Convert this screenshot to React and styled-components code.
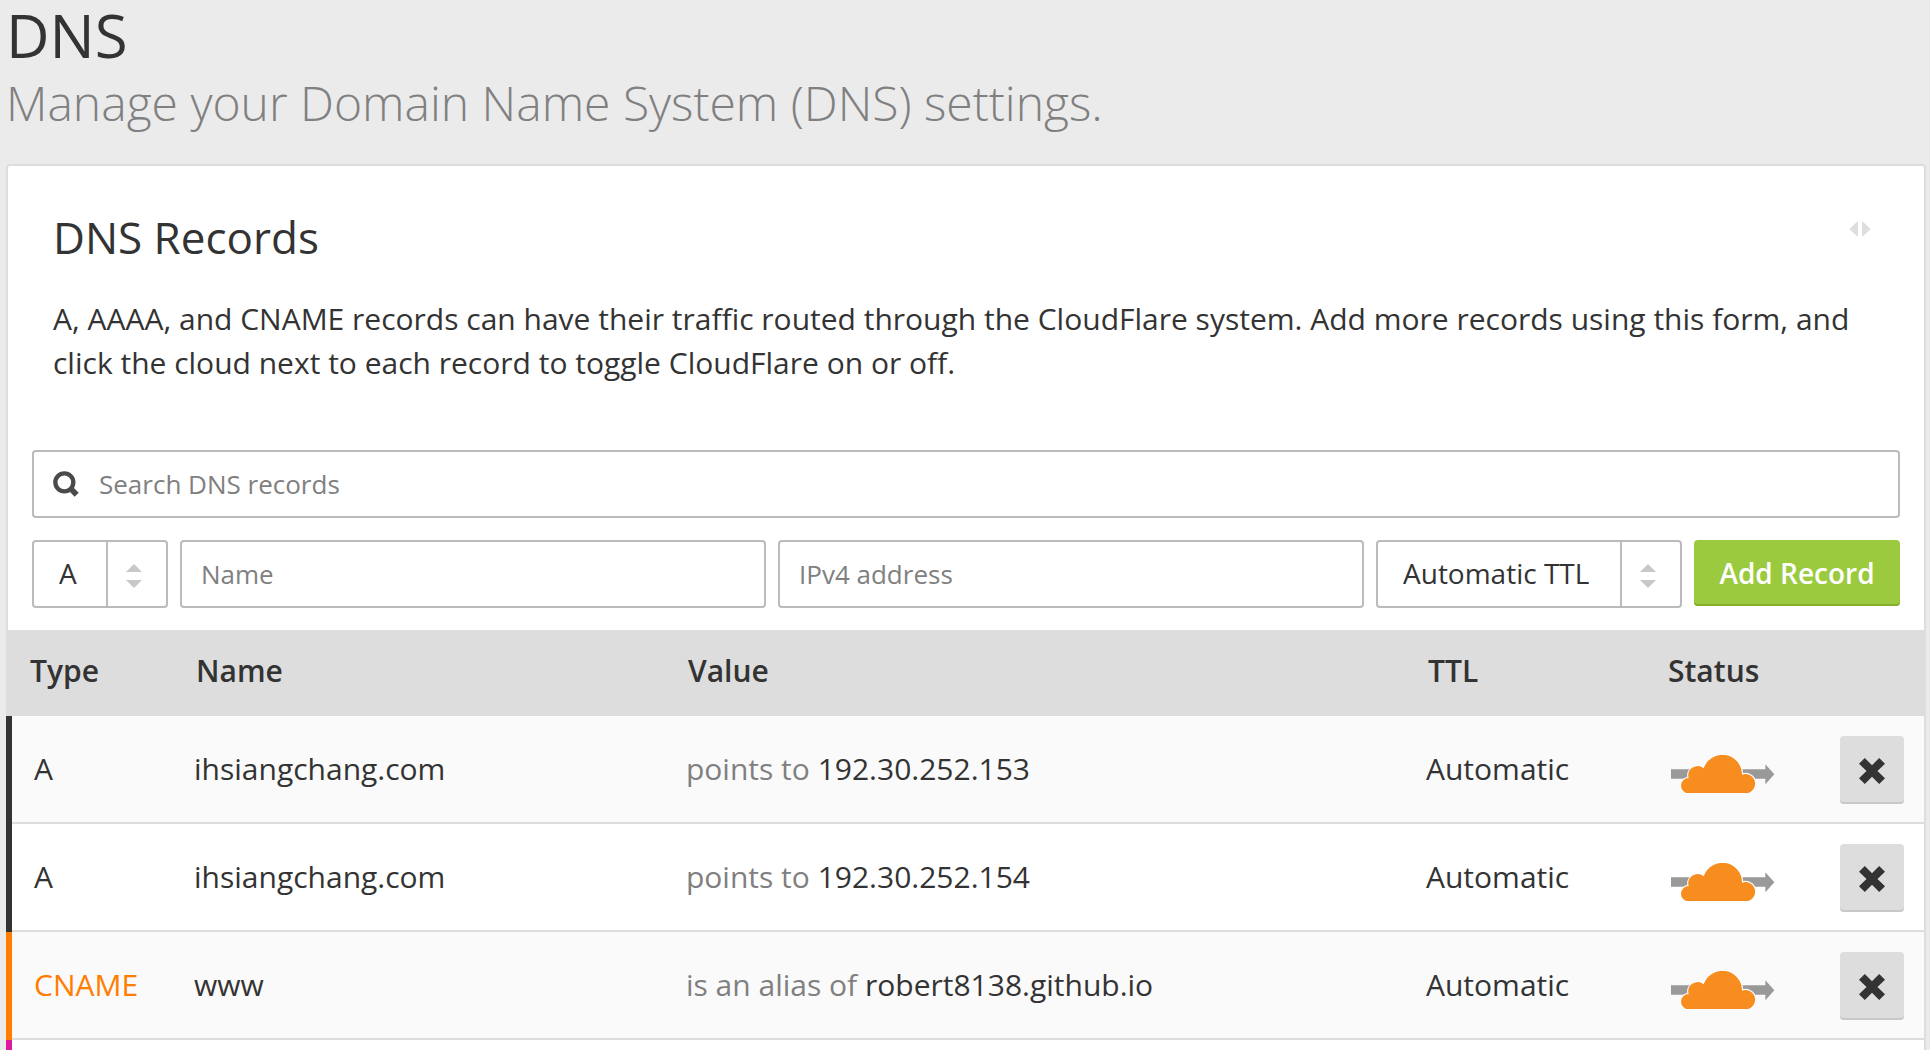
import React from "react";
import styled, { createGlobalStyle } from "styled-components";

const ink = "#333";
const line = "#ddd";
const field = "#bbb";

const GlobalStyle = createGlobalStyle`
  *, *::before, *::after { box-sizing: border-box; }
  body {
    margin: 0;
    background: #ebebeb;
    color: ${ink};
    font-family: "Open Sans", "Noto Sans", sans-serif;
    font-size: 30px;
  }
  button, input, select { font-family: inherit; color: inherit; margin: 0; }
`;

const Page = styled.main`
  height: 100vh;
  overflow: hidden;
  padding: 0 4px 0 6px;
`;

const Title = styled.h1`
  margin: 0;
  font-size: 60px;
  font-weight: 400;
  line-height: 70px;
`;

const Subtitle = styled.p`
  margin: 0 0 28px;
  font-size: 48px;
  font-weight: 300;
  line-height: 66px;
  color: #808080;
`;

const Card = styled.section`
  background: #fff;
  border: 2px solid ${line};
  border-radius: 4px;
`;

const Intro = styled.div`
  padding: 41px 45px 65px;
`;

const IntroHead = styled.div`
  display: flex;
  justify-content: space-between;
  align-items: flex-start;
  padding-right: 8px;
  margin-bottom: 30px;
`;

const CardTitle = styled.h2`
  margin: 0;
  font-size: 44px;
  font-weight: 400;
  line-height: 60px;
`;

const WidthToggle = styled.button`
  display: flex;
  align-items: center;
  height: 44px;
  padding: 0;
  border: 0;
  background: none;
`;

const Description = styled.p`
  margin: 0;
  line-height: 44px;
`;

const Controls = styled.form`
  display: flex;
  flex-direction: column;
  gap: 22px;
  padding: 0 24px 22px;
`;

const SearchBox = styled.label`
  display: flex;
  align-items: center;
  gap: 20px;
  height: 68px;
  padding: 0 19px;
  border: 2px solid ${field};
  border-radius: 4px;
`;

const SearchInput = styled.input`
  flex: 1;
  min-width: 0;
  padding: 0;
  border: 0;
  outline: 0;
  background: none;
  font-size: 26px;
  &::placeholder { color: #808080; opacity: 1; }
`;

const AddRow = styled.div`
  display: flex;
  align-items: flex-start;
  gap: 12px;
`;

const TextInput = styled.input`
  flex: 1;
  min-width: 0;
  height: 68px;
  padding: 0 19px;
  border: 2px solid ${field};
  border-radius: 4px;
  background: #fff;
  font-size: 26px;
  &::placeholder { color: #808080; opacity: 1; }
`;

const SelectBox = styled.div`
  display: grid;
  grid-template-columns: 1fr 60px;
  width: ${(p) => p.$width}px;
  height: 68px;
  border: 2px solid ${field};
  border-radius: 4px;
`;

const Select = styled.select`
  grid-area: 1 / 1 / 2 / 3;
  appearance: none;
  min-width: 0;
  padding: 0 60px 2px 25px;
  border: 0;
  background: none;
  font-size: 28px;
`;

const SelectArrows = styled.span`
  grid-area: 1 / 2 / 2 / 3;
  display: flex;
  align-items: center;
  justify-content: center;
  padding: 4px 6px 0 0;
  border-left: 2px solid ${field};
  pointer-events: none;
`;

const AddButton = styled.button`
  width: 206px;
  height: 66px;
  padding: 0;
  border: 0;
  border-radius: 4px;
  background: #9bca3e;
  box-shadow: inset 0 -2px 0 #85b02f;
  color: #fff;
  font-size: 28px;
  font-weight: 600;
`;

const Table = styled.table`
  width: calc(100% + 2px);
  margin-left: -2px;
  table-layout: fixed;
  border-collapse: separate;
  border-spacing: 0;
`;

const Col = styled.col`
  width: ${(p) => p.$width};
`;

const HeadCell = styled.th`
  height: 86px;
  padding: 0 0 6px ${(p) => p.$inset || 22}px;
  background: ${line};
  font-weight: 600;
  text-align: left;
`;

const Row = styled.tr`
  height: 108px;
  background: #fff;
  &:nth-child(odd) { background: #fafafa; }
`;

const Cell = styled.td`
  padding: 0 0 4px 20px;
  box-shadow: inset 0 -2px 0 ${line};
  white-space: nowrap;
`;

const TypeCell = styled(Cell)`
  padding-left: 28px;
  color: ${(p) => p.$text};
  box-shadow: inset 6px 0 0 ${(p) => p.$stripe}, inset 0 -2px 0 ${line};
`;

const ActionCell = styled(Cell)`
  padding-bottom: 0;
`;

const Relation = styled.span`
  color: #808080;
`;

const IconButton = styled.button`
  display: flex;
  align-items: center;
  justify-content: center;
  padding: 0;
  border: 0;
`;

const ProxyButton = styled(IconButton)`
  padding: 8px 0 0 1px;
  background: none;
`;

const DeleteButton = styled(IconButton)`
  width: 64px;
  height: 68px;
  padding-top: 2px;
  border-radius: 4px;
  background: ${line};
  box-shadow: inset 0 -2px 0 #c8c8c8;
`;

const SearchIcon = () => (
  <svg width="26" height="26" viewBox="0 0 78 78" fill="none" stroke="#4a4a4a" aria-hidden="true">
    <circle cx="34" cy="34" r="27" strokeWidth="13" />
    <path d="M52 52 60 60" strokeWidth="13" />
    <path d="M57 57 71 71" strokeWidth="17" />
  </svg>
);

const WidthIcon = () => (
  <svg width="22" height="16" viewBox="0 0 22 16" fill="#dedede" stroke="#dedede" strokeLinejoin="round" aria-hidden="true">
    <path d="M8.500 1v14L.800 8zM13.500 1v14l7.700-7z" />
  </svg>
);

const UpDownIcon = () => (
  <svg width="16" height="24" viewBox="0 0 16 24" fill="#c8c8c8" aria-hidden="true">
    <path d="M0 8 8 0l8 8zM0 16h16l-8 8z" />
  </svg>
);

const CrossIcon = () => (
  <svg width="26" height="26" viewBox="0 0 76 76" fill={ink} aria-hidden="true">
    <path d="M17 0 38 21 59 0 76 17 54 38 76 59 59 76 38 55 17 76 0 59 22 38 0 17z" />
  </svg>
);

const cloud =
  "M53 115A23 23 0 0 1 53 69A28 28 0 0 1 98 40A59 59 0 0 1 213 59A29 29 0 1 1 225 115Z";

const CloudIcon = () => (
  <svg width="104" height="38" viewBox="0 0 312 114" aria-hidden="true">
    <path d="M0 43H283V28L310 58 283 88V71H0z" fill="#999" />
    <path d={cloud} fill="#fff" stroke="#fff" strokeWidth="7" />
    <path d={cloud} fill="#f78d1e" />
  </svg>
);

const kinds = {
  A: { text: ink, stripe: ink },
  CNAME: { text: "#ff7d00", stripe: "#ff7d00" },
};

const records = [
  { type: "A", name: "ihsiangchang.com", relation: "points to", value: "192.30.252.153" },
  { type: "A", name: "ihsiangchang.com", relation: "points to", value: "192.30.252.154" },
  { type: "CNAME", name: "www", relation: "is an alias of", value: "robert8138.github.io" },
];

function RecordRow({ type, name, relation, value }) {
  return (
    <Row>
      <TypeCell $text={kinds[type].text} $stripe={kinds[type].stripe}>{type}</TypeCell>
      <Cell>{name}</Cell>
      <Cell><Relation>{relation}</Relation> {value}</Cell>
      <Cell>Automatic</Cell>
      <ActionCell><ProxyButton type="button" aria-label="Toggle CloudFlare"><CloudIcon /></ProxyButton></ActionCell>
      <ActionCell><DeleteButton type="button" aria-label="Delete record"><CrossIcon /></DeleteButton></ActionCell>
    </Row>
  );
}

function SelectField({ label, width, option }) {
  return (
    <SelectBox $width={width}>
      <Select aria-label={label}><option>{option}</option></Select>
      <SelectArrows><UpDownIcon /></SelectArrows>
    </SelectBox>
  );
}

export default function App() {
  return (
    <Page>
      <GlobalStyle />
      <Title>DNS</Title>
      <Subtitle>Manage your Domain Name System (DNS) settings.</Subtitle>
      <Card>
        <Intro>
          <IntroHead>
            <CardTitle>DNS Records</CardTitle>
            <WidthToggle type="button" aria-label="Toggle width"><WidthIcon /></WidthToggle>
          </IntroHead>
          <Description>
            A, AAAA, and CNAME records can have their traffic routed through the CloudFlare system. Add more records using this form, and click the cloud next to each record to toggle CloudFlare on or off.
          </Description>
        </Intro>
        <Controls onSubmit={(e) => e.preventDefault()}>
          <SearchBox>
            <SearchIcon />
            <SearchInput type="text" aria-label="Search DNS records" placeholder="Search DNS records" />
          </SearchBox>
          <AddRow>
            <SelectField label="Record type" width={136} option="A" />
            <TextInput aria-label="Name" placeholder="Name" />
            <TextInput aria-label="IPv4 address" placeholder="IPv4 address" />
            <SelectField label="TTL" width={306} option="Automatic TTL" />
            <AddButton type="submit">Add Record</AddButton>
          </AddRow>
        </Controls>
        <Table>
          <colgroup>
            <Col $width="168px" />
            <Col $width="25.65%" />
            <Col />
            <Col $width="244px" />
            <Col $width="170px" />
            <Col $width="104px" />
          </colgroup>
          <thead>
            <tr>
              <HeadCell $inset={24}>Type</HeadCell>
              <HeadCell>Name</HeadCell>
              <HeadCell>Value</HeadCell>
              <HeadCell>TTL</HeadCell>
              <HeadCell $inset={18}>Status</HeadCell>
              <HeadCell aria-label="Actions" />
            </tr>
          </thead>
          <tbody>
            {records.map((r) => <RecordRow key={r.value} {...r} />)}
            <Row>
              <TypeCell $text="#dd1a9c" $stripe="#dd1a9c" />
              <Cell colSpan={5} />
            </Row>
          </tbody>
        </Table>
      </Card>
    </Page>
  );
}
